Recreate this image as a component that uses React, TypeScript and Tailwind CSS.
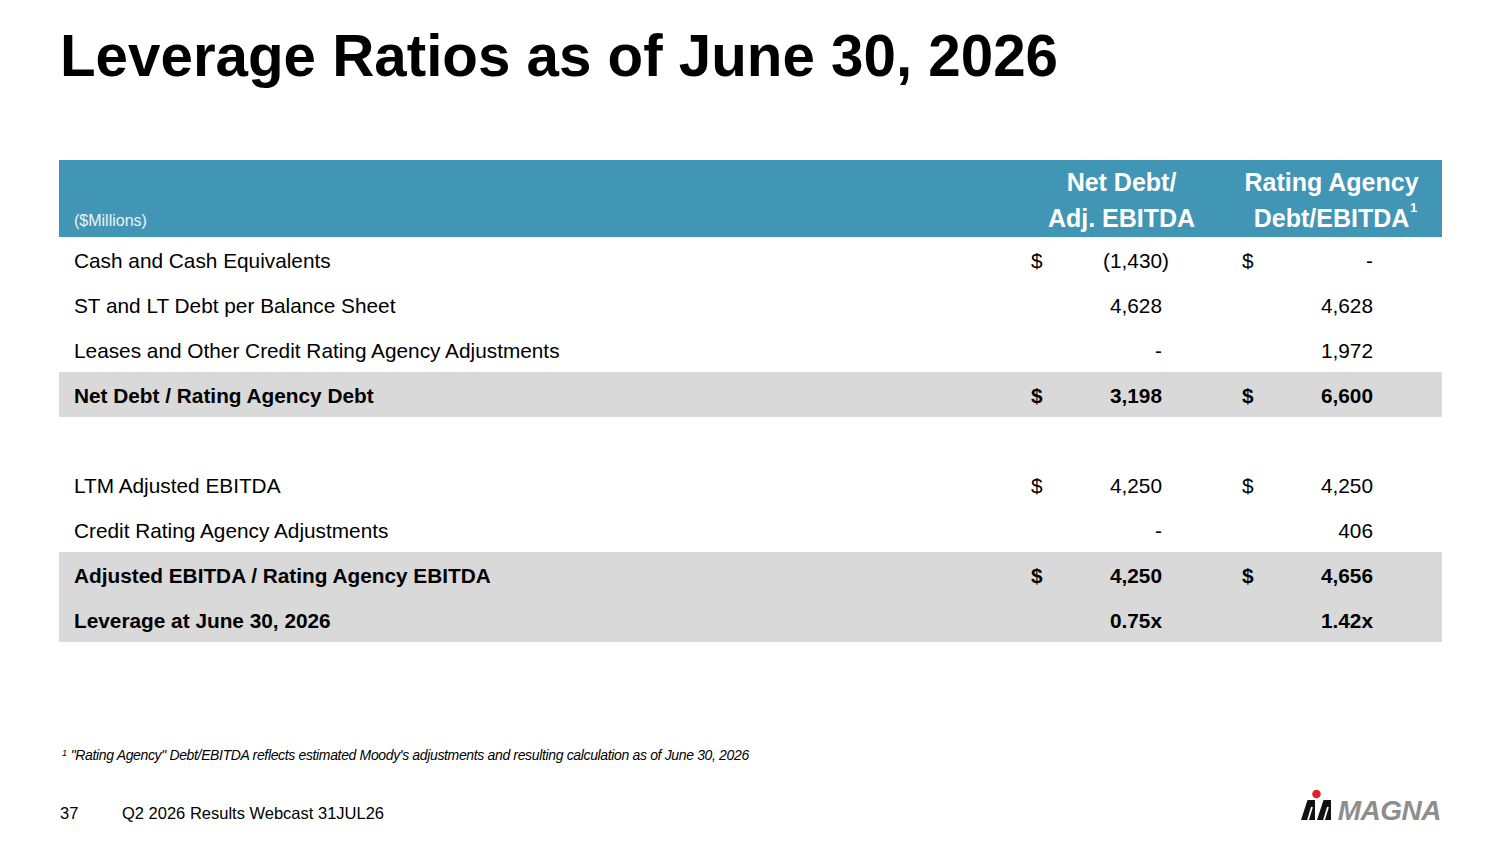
const rows = [
  { label: "Cash and Cash Equivalents", a: "(1,430)", b: "-", sa: true, sb: true, neg: true },
  { label: "ST and LT Debt per Balance Sheet", a: "4,628", b: "4,628" },
  { label: "Leases and Other Credit Rating Agency Adjustments", a: "-", b: "1,972" },
  { label: "Net Debt / Rating Agency Debt", a: "3,198", b: "6,600", sa: true, sb: true, bold: true, gray: true },
  { label: "", a: "", b: "" },
  { label: "LTM Adjusted EBITDA", a: "4,250", b: "4,250", sa: true, sb: true },
  { label: "Credit Rating Agency Adjustments", a: "-", b: "406" },
  { label: "Adjusted EBITDA / Rating Agency EBITDA", a: "4,250", b: "4,656", sa: true, sb: true, bold: true, gray: true },
  { label: "Leverage at June 30, 2026", a: "0.75x", b: "1.42x", bold: true, gray: true },
];

function MagnaLogo() {
  return (
    <div className="flex items-end gap-[5px]">
      <svg width="32" height="32" viewBox="0 0 32 32">
        <circle cx="15.5" cy="5" r="4.3" fill="#e3202a" />
        <polygon points="0,31 6.5,11 14,11 14,31" fill="#111" />
        <polygon points="16,31 22.5,11 30,11 30,31" fill="#111" />
        <line x1="7" y1="31" x2="11" y2="18" stroke="#fff" strokeWidth="1.8" />
        <line x1="23" y1="31" x2="27" y2="18" stroke="#fff" strokeWidth="1.8" />
      </svg>
      <span className="text-[28px] leading-none font-black italic tracking-[-0.5px] text-[#8e8e8e] mb-[-4px]">
        MAGNA
      </span>
    </div>
  );
}

export default function App() {
  return (
    <div className="w-[1500px] h-[844px] bg-white text-black font-['Liberation_Sans',Arial,sans-serif] overflow-hidden">
      <h1 className="pl-[60px] pt-[27px] text-[58.3px] leading-none font-bold">
        Leverage Ratios as of June 30, 2026
      </h1>

      <div className="ml-[59px] mt-[75px] w-[1383px]">
        {/* header */}
        <div className="grid grid-cols-[957px_211px_215px] h-[77px] bg-[#4195b5] text-white items-end pb-[1px]">
          <div className="pl-[15px] text-[16px] leading-[22px] pb-[4px] text-white/90">($Millions)</div>
          <div className="text-center text-[25px] leading-[36px] font-bold">
            Net Debt/
            <br />
            Adj. EBITDA
          </div>
          <div className="text-center text-[25px] leading-[36px] font-bold pr-[6px]">
            Rating Agency
            <br />
            <span className="relative">
              Debt/EBITDA
              <span className="absolute -right-[8px] top-[-3px] text-[13px] leading-none">1</span>
            </span>
          </div>
        </div>

        {/* body */}
        {rows.map((r, i) => (
          <div
            key={i}
            className={`grid grid-cols-[957px_211px_215px] h-[45px] items-center pt-[2px] text-[20.8px] ${r.gray ? "bg-[#d9d9d9]" : ""} ${r.bold ? "font-bold" : ""}`}
          >
            <div className="pl-[15px]">{r.label}</div>
            <div className="flex justify-between pl-[15px] pr-[65px]">
              <span>{r.sa ? "$" : ""}</span>
              <span className={r.neg ? "-mr-[7px]" : ""}>{r.a}</span>
            </div>
            <div className="flex justify-between pl-[15px] pr-[69px]">
              <span>{r.sb ? "$" : ""}</span>
              <span>{r.b}</span>
            </div>
          </div>
        ))}
      </div>

      <p className="pl-[62px] mt-[105px] text-[14px] leading-[16px] italic tracking-[-0.35px] font-['Liberation_Sans_Narrow','Liberation_Sans',sans-serif]">
        <sup className="text-[9px] mr-[4px]">1</sup>"Rating Agency" Debt/EBITDA reflects estimated Moody's adjustments and resulting calculation as of June 30, 2026
      </p>

      <div className="flex items-end justify-between pl-[60px] pr-[59px] mt-[26px]">
        <div className="flex text-[16.5px] leading-[20px] mb-[-2px]">
          <span className="w-[62px]">37</span>
          <span>Q2 2026 Results Webcast 31JUL26</span>
        </div>
        <MagnaLogo />
      </div>
    </div>
  );
}
